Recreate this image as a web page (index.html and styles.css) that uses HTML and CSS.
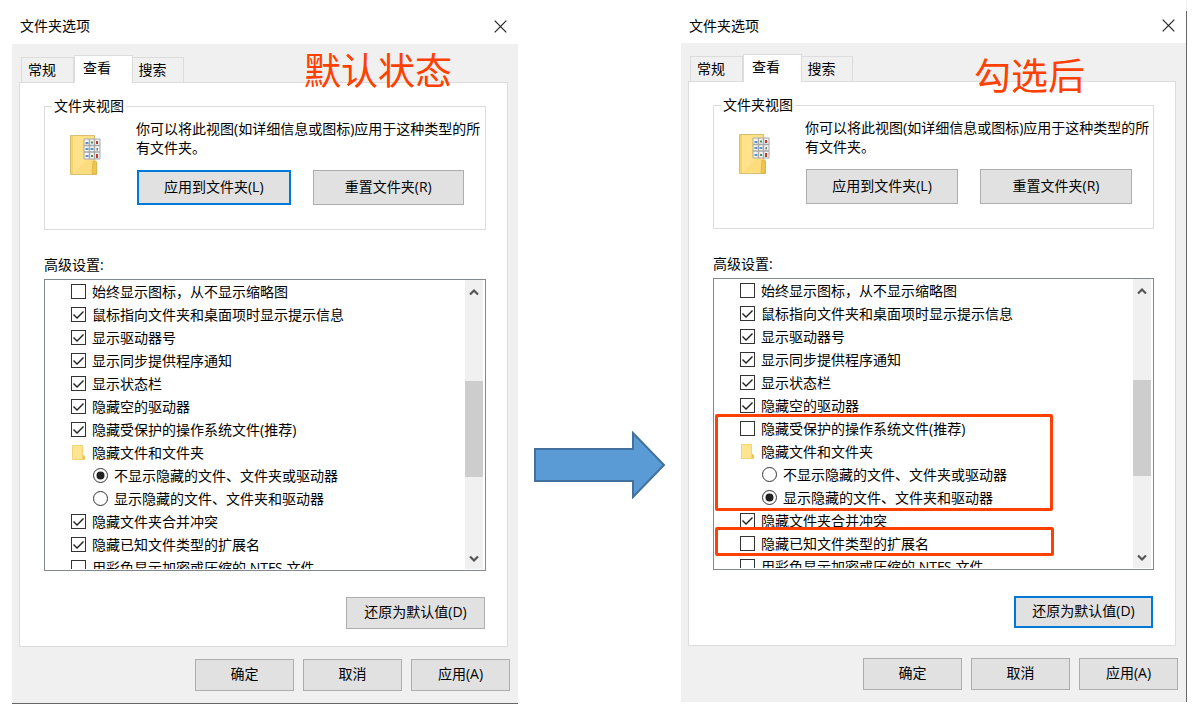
FILE: index.html
```html
<!DOCTYPE html>
<html lang="zh-CN">
<head>
    <meta charset="UTF-8">
    <meta name="viewport" content="width=device-width, initial-scale=1.0">
    <title>文件夹选项</title>
    <link rel="stylesheet" href="styles.css">
</head>
<body>
    <svg class="sprite" aria-hidden="true">
        <symbol id="close" viewBox="0 0 13 13">
            <path d="M.7.7l11.6 11.6M12.3.7L.7 12.3" fill="none" stroke="#222" stroke-width="1.2"/>
        </symbol>
        <symbol id="up" viewBox="0 0 10 8">
            <path d="M1 6.5L5 2.5l4 4" fill="none" stroke="#555" stroke-width="2.2"/>
        </symbol>
        <symbol id="down" viewBox="0 0 10 8">
            <path d="M1 1.5l4 4 4-4" fill="none" stroke="#555" stroke-width="2.2"/>
        </symbol>
        <symbol id="folder" viewBox="0 0 13 15">
            <path d="M.5.5h10v9.500l2 1v3.500H.5z" fill="#ffe591" stroke="#f3d475"/>
            <path d="M10.500 10l2 1v3.500h-2z" fill="#e9bf4a"/>
        </symbol>
        <symbol id="folder-view" viewBox="0 0 32 40">
            <path d="M1.500.5h24V25l2 2v12.500h-26z" fill="#ffe28a" stroke="#d9bd70"/>
            <path d="M2 1h2v38H2z" fill="#f6d368"/>
            <path d="M4 38L24 20v18z" fill="#fbd976" opacity=".6"/>
            <path d="M24 26l3.500 1v12H23z" fill="#efc54f" stroke="#d9a93a" stroke-width=".6"/>
            <path d="M15 4h16v20H15z" fill="#f4f4f4" stroke="#a9a9a9"/>
            <path d="M20.500 4v20M25.500 4v20M15 10.500h16M15 17h16" stroke="#a9a9a9" stroke-width="1.4"/>
            <path d="M16.500 7h3v2h-3zM16.500 13h3v2h-3zM16.500 20h3v2h-3zM21.500 13h3v2h-3z" fill="#5f95c4"/>
            <path d="M22 6.500h2v2h-2zM27.500 13h1.500v2.500h-1.500zM22 20h2v2h-2z" fill="#5f8560"/>
            <path d="M27 6h2v3h-2zM27 19h2v4h-2z" fill="#c5362b"/>
        </symbol>
    </svg>
    <main class="compare">
        <section class="dialog">
            <header class="title-bar">
                <h1>文件夹选项</h1>
                <button class="close" aria-label="关闭"><svg><use href="#close"/></svg></button>
            </header>
            <nav class="tabs">
                <button>常规</button>
                <button class="active">查看</button>
                <button>搜索</button>
            </nav>
            <div class="panel">
                <fieldset>
                    <legend>文件夹视图</legend>
                    <div class="view">
                        <svg class="view-icon"><use href="#folder-view"/></svg>
                        <div>
                            <p>你可以将此视图(如详细信息或图标)应用于这种类型的所有文件夹。</p>
                            <div class="view-buttons">
                                <button class="btn focus">应用到文件夹(L)</button>
                                <button class="btn">重置文件夹(R)</button>
                            </div>
                        </div>
                    </div>
                </fieldset>
                <h2>高级设置:</h2>
                <div class="list">
                    <div class="rows">
                        <label><input type="checkbox">始终显示图标，从不显示缩略图</label>
                        <label><input type="checkbox" checked>鼠标指向文件夹和桌面项时显示提示信息</label>
                        <label><input type="checkbox" checked>显示驱动器号</label>
                        <label><input type="checkbox" checked>显示同步提供程序通知</label>
                        <label><input type="checkbox" checked>显示状态栏</label>
                        <label><input type="checkbox" checked>隐藏空的驱动器</label>
                        <label><input type="checkbox" checked>隐藏受保护的操作系统文件(推荐)</label>
                        <div class="group"><svg><use href="#folder"/></svg>隐藏文件和文件夹</div>
                        <label class="sub"><input type="radio" name="hidden1" checked>不显示隐藏的文件、文件夹或驱动器</label>
                        <label class="sub"><input type="radio" name="hidden1">显示隐藏的文件、文件夹和驱动器</label>
                        <label><input type="checkbox" checked>隐藏文件夹合并冲突</label>
                        <label><input type="checkbox" checked>隐藏已知文件类型的扩展名</label>
                        <label><input type="checkbox">用彩色显示加密或压缩的 NTFS 文件</label>
                    </div>
                    <div class="scrollbar">
                        <svg><use href="#up"/></svg>
                        <div class="thumb"></div>
                        <svg><use href="#down"/></svg>
                    </div>
                </div>
                <button class="btn restore">还原为默认值(D)</button>
            </div>
            <footer>
                <button class="btn">确定</button>
                <button class="btn">取消</button>
                <button class="btn">应用(A)</button>
            </footer>
            <strong class="note">默认状态</strong>
        </section>

        <svg class="arrow" viewBox="0 0 132 68">
            <path d="M1 18h98V2l31 32-31 32V50H1z" fill="#5b9bd5" stroke="#41719c" stroke-width="2"/>
        </svg>

        <section class="dialog after">
            <header class="title-bar">
                <h1>文件夹选项</h1>
                <button class="close" aria-label="关闭"><svg><use href="#close"/></svg></button>
            </header>
            <nav class="tabs">
                <button>常规</button>
                <button class="active">查看</button>
                <button>搜索</button>
            </nav>
            <div class="panel">
                <fieldset>
                    <legend>文件夹视图</legend>
                    <div class="view">
                        <svg class="view-icon"><use href="#folder-view"/></svg>
                        <div>
                            <p>你可以将此视图(如详细信息或图标)应用于这种类型的所有文件夹。</p>
                            <div class="view-buttons">
                                <button class="btn">应用到文件夹(L)</button>
                                <button class="btn">重置文件夹(R)</button>
                            </div>
                        </div>
                    </div>
                </fieldset>
                <h2>高级设置:</h2>
                <div class="list">
                    <div class="rows">
                        <label><input type="checkbox">始终显示图标，从不显示缩略图</label>
                        <label><input type="checkbox" checked>鼠标指向文件夹和桌面项时显示提示信息</label>
                        <label><input type="checkbox" checked>显示驱动器号</label>
                        <label><input type="checkbox" checked>显示同步提供程序通知</label>
                        <label><input type="checkbox" checked>显示状态栏</label>
                        <label><input type="checkbox" checked>隐藏空的驱动器</label>
                        <label><input type="checkbox">隐藏受保护的操作系统文件(推荐)</label>
                        <div class="group"><svg><use href="#folder"/></svg>隐藏文件和文件夹</div>
                        <label class="sub"><input type="radio" name="hidden2">不显示隐藏的文件、文件夹或驱动器</label>
                        <label class="sub"><input type="radio" name="hidden2" checked>显示隐藏的文件、文件夹和驱动器</label>
                        <label><input type="checkbox" checked>隐藏文件夹合并冲突</label>
                        <label><input type="checkbox">隐藏已知文件类型的扩展名</label>
                        <label><input type="checkbox">用彩色显示加密或压缩的 NTFS 文件</label>
                    </div>
                    <div class="scrollbar">
                        <svg><use href="#up"/></svg>
                        <div class="thumb"></div>
                        <svg><use href="#down"/></svg>
                    </div>
                    <div class="mark mark-files"></div>
                    <div class="mark mark-ext"></div>
                </div>
                <button class="btn restore focus">还原为默认值(D)</button>
            </div>
            <footer>
                <button class="btn">确定</button>
                <button class="btn">取消</button>
                <button class="btn">应用(A)</button>
            </footer>
            <strong class="note">勾选后</strong>
        </section>
    </main>
</body>
</html>
```
FILE: styles.css
```css
* {
    box-sizing: border-box;
}
body, button {
    font-family: "Open Sans", "Noto Sans CJK SC", sans-serif;
    font-size: 14px;
    line-height: 18px;
    color: #000;
}
body {
    margin: 0;
    background-color: white;
}
h1, h2, p {
    margin: 0;
    font-size: 14px;
    font-weight: normal;
}
button {
    padding: 0;
}
.sprite {
    display: none;
}
.compare {
    display: grid;
    grid-template-columns: 1fr 163px 1fr;
    align-items: start;
    padding: 0 6px 0 12px;
}

/* dialog window */
.dialog {
    position: relative;
    background-color: #f0f0f0;
    border-bottom: 1px solid #666;
}
.title-bar {
    display: flex;
    align-items: center;
    justify-content: space-between;
    height: 44px;
    padding: 8px 11px 0 8px;
    background-color: white;
}
.close {
    display: flex;
    border: none;
    background: none;
}
.close svg {
    width: 13px;
    height: 13px;
}
.after {
    border-bottom: none;
    padding-right: 1px;
}
.after .title-bar {
    height: 43px;
}
.after::after {
    content: "";
    position: absolute;
    top: 11px;
    right: 0;
    bottom: 0;
    width: 1px;
    background-color: #666;
}

/* tabs */
.tabs {
    display: flex;
    align-items: flex-end;
    height: 38px;
    padding-left: 9px;
}
.tabs button {
    width: 53px;
    height: 25px;
    padding-right: 11px;
    border: 1px solid #dcdcdc;
    border-bottom: none;
    background-color: #f0f0f0;
}
.tabs .active {
    position: relative;
    width: 59px;
    height: 28px;
    margin-bottom: -1px;
    padding: 0 13px 3px 0;
    background-color: white;
}
.tabs button:last-child {
    border-left: none;
    width: 51px;
}
.panel {
    margin: 0 10px 0 7px;
    padding: 14px 21px 17px 24px;
    border: 1px solid #dcdcdc;
    background-color: white;
}

/* folder views */
fieldset {
    min-width: 0;
    margin: 0;
    padding: 0;
    border: 1px solid #dcdcdc;
}
legend {
    margin-left: 7px;
    padding: 0 2px;
}
.view {
    display: flex;
    gap: 35px;
    padding: 4px 0 24px 24px;
}
.view p {
    line-height: 19px;
}
.view-icon {
    flex: none;
    width: 32px;
    height: 40px;
    margin-top: 16px;
}
.view-buttons {
    display: flex;
    gap: 22px;
    margin: 13px 21px 0 1px;
}
.view-buttons .btn {
    flex: 1;
    height: 35px;
}
.btn {
    height: 32px;
    padding-bottom: 2px;
    border: 1px solid #adadad;
    background-color: #e1e1e1;
}
.focus {
    border: 2px solid #0078d7;
}

/* advanced settings */
h2 {
    margin: 26px 0 5px;
}
.list {
    position: relative;
    display: flex;
    height: 292px;
    padding: 0 2px 1px 0;
    border: 1px solid #828790;
}
.rows {
    flex: 1;
    padding-left: 26px;
    overflow: hidden;
}
.rows label, .group {
    display: flex;
    align-items: center;
    gap: 6px;
    height: 23px;
    white-space: nowrap;
}
.rows .sub {
    padding-left: 22px;
}
.group svg {
    width: 13px;
    height: 15px;
    margin: 0 1px;
}
input {
    appearance: none;
    flex: none;
    width: 15px;
    height: 15px;
    margin: 0;
    border: 1px solid #333;
    background-color: white;
}
input:checked::before {
    content: "";
    display: block;
    width: 13px;
    height: 13px;
    background-color: #222;
    clip-path: polygon(1px 7px, 2px 6px, 5px 9px, 11px 3px, 12px 4px, 5px 11px);
}
input[type="radio"] {
    border-radius: 50%;
}
input[type="radio"]:checked::before {
    clip-path: circle(4px);
}
.scrollbar {
    display: flex;
    flex-direction: column;
    align-items: center;
    width: 18px;
    padding: 8px 0 6px;
    background-color: #f0f0f0;
}
.scrollbar svg {
    width: 10px;
    height: 8px;
}
.thumb {
    width: 100%;
    height: 96px;
    margin: 85px 0 auto;
    background-color: #cdcdcd;
}
.restore {
    display: block;
    width: 139px;
    margin: 26px 1px 0 auto;
}
footer {
    display: flex;
    justify-content: flex-end;
    gap: 9px;
    padding: 12px 8px 12px;
}
footer .btn {
    width: 99px;
}

/* red annotations over the dialogs */
.note {
    position: absolute;
    top: 45px;
    right: 66px;
    font-size: 37px;
    font-weight: normal;
    line-height: 52px;
    color: #ff4000;
}
.after .note {
    top: 50px;
    right: 102px;
}
.mark {
    position: absolute;
    left: 1px;
    border: 3px solid #ff4000;
    border-radius: 2px;
}
.mark-files {
    top: 135px;
    width: 338px;
    height: 97px;
}
.mark-ext {
    top: 248px;
    width: 339px;
    height: 29px;
}
.arrow {
    width: 132px;
    margin: 431px 0 0 16px;
}
```
